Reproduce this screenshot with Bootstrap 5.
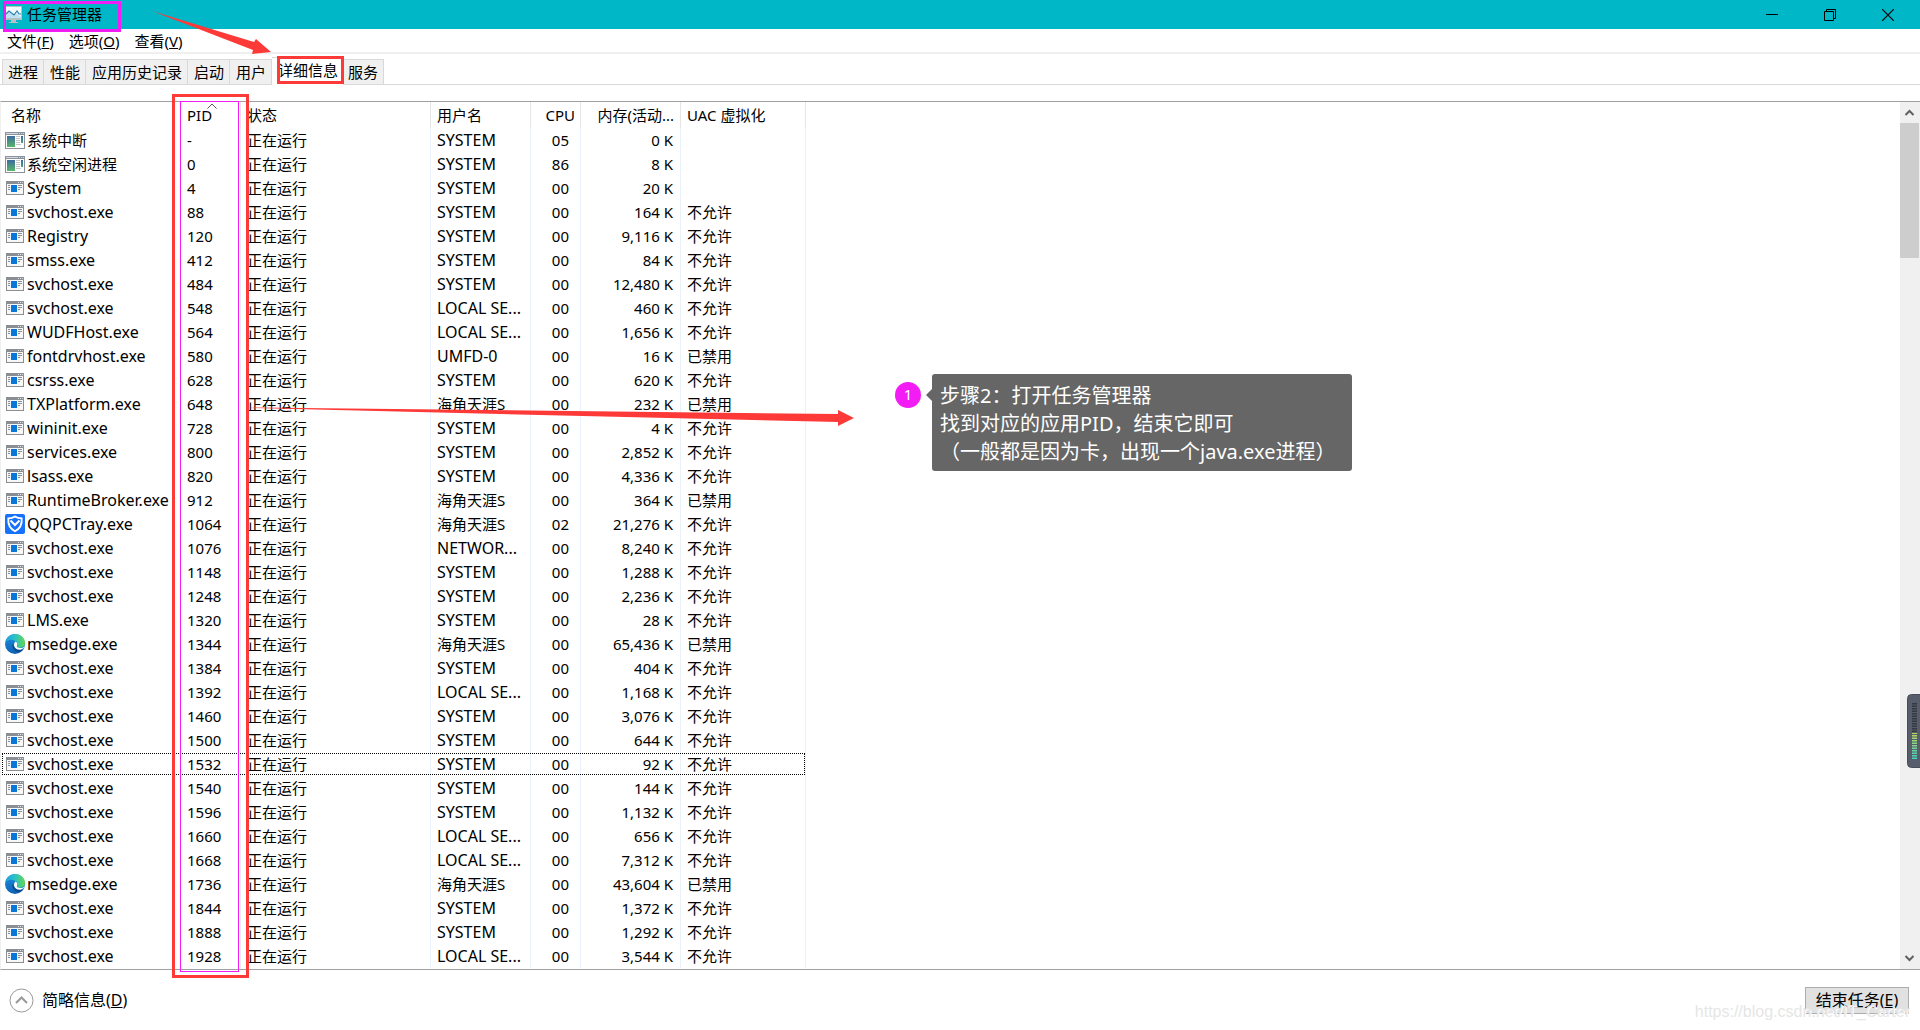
<!DOCTYPE html>
<html lang="zh-CN">
<head>
<meta charset="utf-8">
<meta name="viewport" content="width=device-width, initial-scale=1">
<title>任务管理器</title>
<link href="https://cdn.jsdelivr.net/npm/bootstrap@5.3.0/dist/css/bootstrap.min.css" rel="stylesheet">
<script src="https://cdn.jsdelivr.net/npm/bootstrap@5.3.0/dist/js/bootstrap.bundle.min.js" defer></script>
<style>
  body { font: 15px/24px "Noto Sans", "Noto Sans CJK SC", sans-serif; color: #000; background: #fff; }
  .app { min-height: 100vh; }
  .titlebar { background: #00b7c7; height: 29px; padding: 0 3px 2px 5px; }
  .win-btn { width: 58px; height: 27px; border: 0; background: none; padding: 0; line-height: 24px; }
  .menubar { height: 25px; padding-left: 7px; gap: 15px; border-bottom: 2px solid #f0f0f0; }
  .menubar a { color: #000; text-decoration: none; line-height: 24px; }
  .tabs { height: 31px; padding: 3px 0 0 2px; border-bottom: 1px solid #d9d9d9; align-items: flex-end; }
  .tabs button { height: 25px; padding: 0 5px 0 6px; border: 1px solid #d9d9d9; border-left-width: 0; border-bottom: 0; background: #f0f0f0; line-height: 24px; color: #000; }
  .tabs button:first-child { border-left-width: 1px; padding-left: 5px; }
  .tabs .current { height: 28px; margin-bottom: -1px; padding: 0 5px 3px 6px; background: #fff; }
  .tabs .current + button { padding: 0 5px 0 4px; }
  .list-area { margin-top: 16px; border-top: 1px solid #a0a0a0; border-bottom: 1px solid #a0a0a0; border-left: 1px solid #f0f0f0; }
  .procs { width: 805px; table-layout: fixed; border-collapse: separate; border-spacing: 0; }
  .procs th { font-weight: 400; height: 26px; border-right: 1px solid #e5e5e5; }
  .procs td { height: 24px; border-right: 1px solid #e9f1fd; }
  .procs th, .procs td { padding: 0 6px; line-height: 24px; white-space: nowrap; overflow: hidden; }
  .procs th:first-child { padding-left: 10px; }
  .procs td:first-child { padding: 0 0 0 4px; }
  .procs .latin { font-size: 16px; }
  .procs .ctr { text-align: right; padding-right: 11px; }
  .procs th.ctr { padding-right: 5px; }
  .procs td.num { text-align: right; padding-right: 7px; }
  .procs th.num { text-align: right; }
  .sort-mark { position: absolute; left: 26px; top: 1px; }
  .procs tr.focused { outline: 1px dotted #000; outline-offset: -2px; }
  .ico { width: 20px; height: 20px; margin-right: 2px; flex: none; }
  .scroller { width: 20px; background: #f0f0f0; }
  .scroller button { height: 21px; border: 0; padding: 0; background: none; width: 20px; line-height: 0; }
  .thumb { height: 135px; width: 19px; background: #cdcdcd; }
  .footer-bar { height: 60px; padding: 0 11px 0 9px; font-size: 16px; }
  .fewer { border: 0; background: none; padding: 0; gap: 8px; color: #000; }
  .end-task { width: 104px; height: 27px; padding: 0; border: 1px solid #adadad; background: #e1e1e1; line-height: 24px; color: #000; }
  .outline-box { position: absolute; pointer-events: none; }
  .box-title { left: 3px; top: 1px; width: 118px; height: 31px; border: 3px solid #f41cf4; }
  .box-tab { left: 277px; top: 56px; width: 67px; height: 28px; border: 3px solid #fe3a39; }
  .box-pid { left: 172px; top: 94px; width: 77px; height: 884px; border: 3px solid #fe3a39; }
  .box-pid-in { left: 180px; top: 101px; width: 59px; height: 871px; border: 1px solid #f41cf4; }
  .arrows { position: absolute; left: 0; top: 0; pointer-events: none; }
  .note { position: absolute; left: 932px; top: 374px; width: 420px; height: 97px; padding: 8px; background: #666; color: #fff; border-radius: 3px; font-size: 20px; line-height: 28px; white-space: nowrap; }
  .note::before { content: ""; position: absolute; left: -6px; top: 15px; border: 6px solid transparent; border-left: 0; border-right-color: #666; }
  .pin { position: absolute; left: 895px; top: 382px; width: 26px; height: 26px; border-radius: 50%; background: #f41cf4; color: #fff; font-size: 15px; line-height: 25px; text-align: center; }
  .meter-tab { position: absolute; right: 0; top: 694px; }
  .watermark { position: absolute; right: 10px; top: 1000px; font: 16px/24px "Liberation Sans", sans-serif; color: #e6e6e6; text-shadow: 1px 1px 0 #fff; pointer-events: none; }
</style>
</head>
<body>
<svg width="0" height="0" class="position-absolute" aria-hidden="true">
  <linearGradient id="scr" x1="0" y1="0" x2="0" y2="1"><stop offset="0" stop-color="#3d6a9e"/><stop offset="1" stop-color="#57b66a"/></linearGradient>
  <linearGradient id="eg1" x1="0" y1="0" x2="1" y2="0"><stop offset="0" stop-color="#1f9fe0"/><stop offset=".5" stop-color="#2cc3c6"/><stop offset="1" stop-color="#62d84e"/></linearGradient>
  <linearGradient id="eg2" x1="0" y1="0" x2="0" y2="1"><stop offset="0" stop-color="#1b8fdd"/><stop offset="1" stop-color="#1161b5"/></linearGradient>
  <linearGradient id="lvl" x1="0" y1="0" x2="0" y2="1"><stop offset="0" stop-color="#b9d95a"/><stop offset="1" stop-color="#3fd8c8"/></linearGradient>
  <symbol id="i-exe" viewBox="0 0 20 20"><path fill="#8b8f94" d="M1 3h18v14H1z"/><path fill="#f7f7f7" d="M2 6h16v10H2z"/><path fill="#dfe3e8" d="M13 4h1v1h-1zM15 4h1v1h-1zM17 4h1v1h-1z"/><path fill="#0877d9" d="M6 7h6v7H6z"/><path stroke="#8b8f94" d="M3 7.500h2M3 9.500h2M3 11.500h2M13 7.500h4M13 9.500h4M13 11.500h2"/></symbol>
  <symbol id="i-sys" viewBox="0 0 20 20"><path fill="#8b929c" d="M0 2h20v17H0z"/><path fill="#fff" d="M1 5h18v13H1z"/><path fill="#d5dbe4" d="M1 3h12v1H1z"/><path fill="#d5dbe4" d="M14 3h1v1h-1zM16 3h1v1h-1zM18 3h1v1h-1z"/><path fill="url(#scr)" d="M2 6h8v11H2zM16 6h2v7h-2z"/><path stroke="#c3c6ca" d="M11 6.500h4M11 8.500h4M11 10.500h4M11 12.500h4M11 14.500h5"/></symbol>
  <symbol id="i-qq" viewBox="0 0 20 20"><rect width="20" height="20" rx="2" fill="#1772fb"/><path fill="none" stroke="#fff" stroke-width="1.800" d="M10 2.500C8 4 5.500 4.300 3.300 4.300c-.5 6 1.700 10.500 6.700 12.900 5-2.400 7.200-6.900 6.700-12.900C14.500 4.300 12 4 10 2.500z"/><path fill="none" stroke="#fff" stroke-width="2" d="M5.500 6.500 10 11l4.500-4.500"/></symbol>
  <symbol id="i-edge" viewBox="0 0 20 20"><circle cx="10" cy="10" r="10" fill="url(#eg2)"/><path fill="#0c4a8f" d="M7.500 10c-1 4 2 8 6 8.300 1.500 0 3.500-1 5-3.300-3 1.500-6 1-8-1z"/><path fill="url(#eg1)" d="M.2 8.500C1.200 3.500 5.200 0 10 0c6 0 10 4.300 10 8.800 0 3.200-2.300 5-5 5-2 0-3.200-.8-3-1.600.9-1.200.9-2.700-.2-4C9.500 5 3.500 4.500.2 8.500z"/><path fill="#fff" d="M10.500 7.500c2 1 2.500 3 1.300 4.600-.2 1.200 1.500 2 3.500 2 1.700 0 3.200-.6 4.400-1.900-1.100 3.300-4.900 4.100-7.700 3-3.100-1.200-4-5.400-1.500-7.700z"/></symbol>
</svg>

<div class="app d-flex flex-column position-relative">
  <header class="titlebar d-flex align-items-center">
    <svg width="18" height="20" viewBox="0 0 18 20" aria-hidden="true"><path fill="#b8bfc4" d="M0 2h17v14H0zM6 16h5v2h2v1H4v-1h2z"/><path fill="#f2fafd" d="M1 3h15v11H1z"/><path fill="#bfe2f3" d="M1 10l3-3 4 3 3-1 5 4v1H1z"/><path fill="none" stroke="#2a7fae" stroke-width="1.200" d="M1 10l3-3 5 4 3-4 2 3h2"/></svg>
    <span class="ms-1 flex-grow-1">任务管理器</span>
    <button class="win-btn" aria-label="最小化"><svg width="12" height="12"><path stroke="#000" d="M0 5.500h12"/></svg></button>
    <button class="win-btn" aria-label="还原"><svg width="12" height="12"><path fill="none" stroke="#000" d="M.5 2.500h9v9h-9zM2.500 2.500v-2h9v9h-2"/></svg></button>
    <button class="win-btn" aria-label="关闭"><svg width="12" height="12"><path stroke="#000" stroke-width="1.200" d="M0 0l12 12M12 0L0 12"/></svg></button>
  </header>
  <nav class="menubar d-flex">
    <a href="#">文件(<u>F</u>)</a><a href="#">选项(<u>O</u>)</a><a href="#">查看(<u>V</u>)</a>
  </nav>
  <div class="tabs d-flex" role="tablist">
    <button role="tab">进程</button><button role="tab">性能</button><button role="tab">应用历史记录</button><button role="tab">启动</button><button role="tab">用户</button><button role="tab" class="current" aria-selected="true">详细信息</button><button role="tab">服务</button>
  </div>
  <main class="list-area d-flex flex-grow-1">
    <div class="flex-grow-1">
      <table class="procs">
        <colgroup><col style="width:180px"><col style="width:60px"><col style="width:190px"><col style="width:100px"><col style="width:50px"><col style="width:100px"><col style="width:125px"></colgroup>
        <thead><tr><th>名称</th><th class="position-relative">PID<svg class="sort-mark" width="10" height="6" aria-hidden="true"><path fill="none" stroke="#555" d="M.5 5.500L5 1l4.500 4.500"/></svg></th><th>状态</th><th>用户名</th><th class="ctr">CPU</th><th class="num">内存(活动...</th><th>UAC 虚拟化</th></tr></thead>
        <tbody id="rows"></tbody>
      </table>
    </div>
    <div class="scroller d-flex flex-column">
      <button aria-label="向上"><svg width="20" height="21"><path fill="none" stroke="#606060" stroke-width="2" d="M5.500 13l4-4 4 4"/></svg></button>
      <div class="thumb"></div>
      <button class="mt-auto" aria-label="向下"><svg width="20" height="21"><path fill="none" stroke="#606060" stroke-width="2" d="M5.500 8l4 4 4-4"/></svg></button>
    </div>
  </main>
  <footer class="footer-bar d-flex align-items-center justify-content-between">
    <button class="fewer d-flex align-items-center"><svg width="25" height="25" viewBox="0 0 25 25"><circle cx="12.500" cy="12.500" r="11.500" fill="none" stroke="#999"/><path fill="none" stroke="#999" stroke-width="2" d="M7 15l5.500-5.500L18 15"/></svg><span>简略信息(<u>D</u>)</span></button>
    <button class="end-task">结束任务(<u>E</u>)</button>
  </footer>

  <div class="outline-box box-title"></div>
  <div class="outline-box box-tab"></div>
  <div class="outline-box box-pid-in"></div>
  <div class="outline-box box-pid"></div>
  <svg class="arrows" width="860" height="440" aria-hidden="true">
    <path fill="#fe3a39" d="M152 11l102 31 2-3 15 13-19 2 1-4z"/>
    <path fill="#fe3a39" d="M250 408l6-.5 582 6.500v-4l16 8-16 8v-4z"/>
  </svg>
  <div class="pin">1</div>
  <div class="note">步骤2：打开任务管理器<br>找到对应的应用PID，结束它即可<br>（一般都是因为卡，出现一个java.exe进程）</div>
  <svg class="meter-tab" width="13" height="75" aria-hidden="true">
    <rect x=".5" y=".5" width="20" height="73" rx="4" fill="#585d6b" stroke="#484c58"/>
    <path stroke="#343843" stroke-width="5" stroke-dasharray="1.500 1" d="M7.500 9v29"/>
    <path fill="url(#lvl)" d="M5 39h5v27H5z"/>
    <path stroke="#585d6b" stroke-width="5" stroke-dasharray="1 1.500" d="M7.500 40v26"/>
  </svg>
  <div class="watermark">https://blog.csdn.net/IT_Carter</div>
</div>
<script>
  const S = 'SYSTEM', L = 'LOCAL SE...', H = '海角天涯S', N = '不允许', D = '已禁用', V = 'svchost.exe';
  const data = [
    ['系统中断','-',S,'05','0',''],['系统空闲进程','0',S,'86','8',''],['System','4',S,'00','20',''],[V,'88',S,'00','164',N],
    ['Registry','120',S,'00','9,116',N],['smss.exe','412',S,'00','84',N],[V,'484',S,'00','12,480',N],[V,'548',L,'00','460',N],
    ['WUDFHost.exe','564',L,'00','1,656',N],['fontdrvhost.exe','580','UMFD-0','00','16',D],['csrss.exe','628',S,'00','620',N],
    ['TXPlatform.exe','648',H,'00','232',D],['wininit.exe','728',S,'00','4',N],['services.exe','800',S,'00','2,852',N],
    ['lsass.exe','820',S,'00','4,336',N],['RuntimeBroker.exe','912',H,'00','364',D],['QQPCTray.exe','1064',H,'02','21,276',N],
    [V,'1076','NETWOR...','00','8,240',N],[V,'1148',S,'00','1,288',N],[V,'1248',S,'00','2,236',N],['LMS.exe','1320',S,'00','28',N],
    ['msedge.exe','1344',H,'00','65,436',D],[V,'1384',S,'00','404',N],[V,'1392',L,'00','1,168',N],[V,'1460',S,'00','3,076',N],
    [V,'1500',S,'00','644',N],[V,'1532',S,'00','92',N],[V,'1540',S,'00','144',N],[V,'1596',S,'00','1,132',N],[V,'1660',L,'00','656',N],
    [V,'1668',L,'00','7,312',N],['msedge.exe','1736',H,'00','43,604',D],[V,'1844',S,'00','1,372',N],[V,'1888',S,'00','1,292',N],[V,'1928',L,'00','3,544',N]
  ];
  const icon = n => n.startsWith('系统') ? 'sys' : n === 'QQPCTray.exe' ? 'qq' : n === 'msedge.exe' ? 'edge' : 'exe';
  const face = t => /^[A-Za-z]/.test(t) ? ' class="latin"' : '';
  document.getElementById('rows').innerHTML = data.map(([n, p, u, c, m, v]) =>
    `<tr${p === '1532' ? ' class="focused"' : ''}><td${face(n)}><div class="d-flex align-items-center"><svg class="ico"><use href="#i-${icon(n)}"/></svg>${n}</div></td><td>${p}</td><td>正在运行</td><td${face(u)}>${u}</td><td class="ctr">${c}</td><td class="num">${m} K</td><td>${v}</td></tr>`).join('');
</script>
</body>
</html>
